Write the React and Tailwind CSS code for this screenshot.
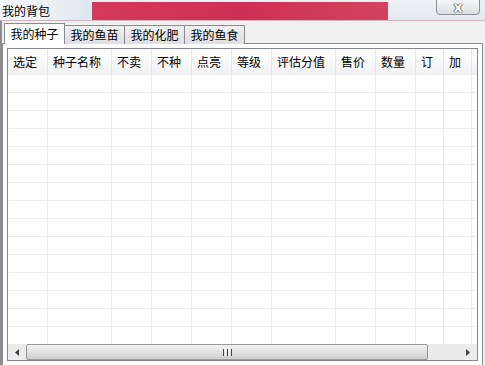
import React from 'react';

const font = { fontFamily: '"Noto Sans CJK SC", "Microsoft YaHei", sans-serif' };

const columns = [
  { label: '选定', w: 40 },
  { label: '种子名称', w: 64 },
  { label: '不卖', w: 40 },
  { label: '不种', w: 40 },
  { label: '点亮', w: 40 },
  { label: '等级', w: 40 },
  { label: '评估分值', w: 64 },
  { label: '售价', w: 40 },
  { label: '数量', w: 40 },
  { label: '订', w: 28 },
  { label: '加', w: 28 },
];

const tabs = ['我的种子', '我的鱼苗', '我的化肥', '我的鱼食'];

function TitleBar() {
  return (
    <div className="relative flex h-[25px] w-full">
      <div className="flex w-[92px] items-center bg-gradient-to-r from-[#f4f7fb] via-[#eef2f7] to-[#dfe6ef] pl-[2px] pt-[1px] text-[12px] leading-[20px] text-black">
        我的背包
      </div>
      <div className="mt-[2px] w-[296px] bg-gradient-to-r from-[#d33a5c] via-[#cf2f56] to-[#d2435d]" />
      <div className="flex-1 bg-gradient-to-b from-[#eef1f6] to-[#e4e9f0]" />
      <div className="absolute right-[5px] top-[-2px] flex h-[17px] w-[44px] items-center justify-center rounded-b-[4px] border border-[#8a8f98] bg-gradient-to-b from-[#f6f7f9] to-[#dcdfe4]">
        <span className="text-[14px] font-bold leading-none text-white [text-shadow:0_0_1px_#222,0_0_1px_#222,0_0_1px_#222]" style={{ fontFamily: '"DejaVu Sans", sans-serif' }}>x</span>
      </div>
      <div className="absolute bottom-0 left-0 h-px w-full bg-[#c9b4bb]" />
    </div>
  );
}

function Tabs() {
  return (
    <div className="relative z-10 flex h-[21px] items-end pl-[2px]">
      {tabs.map((t, i) =>
        i === 0 ? (
          <div key={t} className="flex h-[21px] w-[61px] items-center justify-center border border-b-0 border-[#898c95] bg-white text-[12px] text-black">
            {t}
          </div>
        ) : (
          <div key={t} className="-ml-px flex h-[19px] w-[61px] items-center justify-center border border-b-0 border-[#898c95] bg-gradient-to-b from-[#f2f2f2] to-[#dedede] text-[12px] text-black">
            {t}
          </div>
        )
      )}
    </div>
  );
}

function Grid() {
  const rows = Array.from({ length: 15 });
  return (
    <div className="flex h-full flex-col border border-[#828790] bg-white">
      <div className="flex-1 overflow-hidden">
        <div className="flex h-[25px] bg-gradient-to-b from-white to-[#f1f2f4]">
          {columns.map((c) => (
            <div key={c.label} style={{ width: c.w }} className="flex shrink-0 items-center border-r border-[#e3e4e6] pl-[5px] text-[12px] text-black">
              {c.label}
            </div>
          ))}
        </div>
        {rows.map((_, r) => (
          <div key={r} className="flex h-[18px] border-t border-[#ececec]">
            {columns.map((c) => (
              <div key={c.label} style={{ width: c.w }} className="shrink-0 border-r border-[#ececec]" />
            ))}
          </div>
        ))}
      </div>
      <div className="flex h-[16px] items-stretch bg-[#ececec]">
        <div className="flex w-[18px] items-center justify-center">
          <svg width="4" height="7" viewBox="0 0 4 7"><path d="M4 0L0 3.5L4 7Z" fill="#404040" /></svg>
        </div>
        <div className="flex w-[402px] items-center justify-center rounded-[2px] border border-[#9a9a9a] bg-gradient-to-b from-[#f3f3f3] via-[#e2e2e2] to-[#cfcfcf]">
          <div className="flex gap-[1px]">
            <span className="h-[7px] w-[1px] bg-[#444]" />
            <span className="h-[7px] w-[1px] bg-[#fff]" />
            <span className="h-[7px] w-[1px] bg-[#444]" />
            <span className="h-[7px] w-[1px] bg-[#fff]" />
            <span className="h-[7px] w-[1px] bg-[#444]" />
          </div>
        </div>
        <div className="flex-1" />
        <div className="flex w-[18px] items-center justify-center">
          <svg width="4" height="7" viewBox="0 0 4 7"><path d="M0 0L4 3.5L0 7Z" fill="#404040" /></svg>
        </div>
      </div>
    </div>
  );
}

export default function App() {
  return (
    <div className="flex h-[365px] w-[485px] flex-col overflow-hidden bg-[#f0f0f0]" style={font}>
      <TitleBar />
      <div className="flex flex-1 flex-col border-l-2 border-[#8d8d8d] pt-[2px]">
        <Tabs />
        <div className="-mt-px mb-[2px] mr-[2px] flex-1 border border-[#898c95] bg-white p-[4px]">
          <Grid />
        </div>
      </div>
    </div>
  );
}
